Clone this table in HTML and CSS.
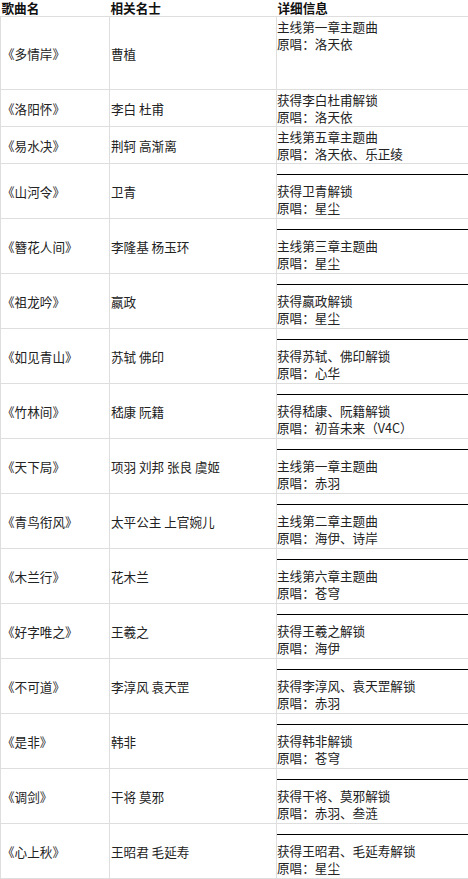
FILE: index.html
```html
<!DOCTYPE html>
<html lang="zh">
<head>
<meta charset="utf-8">
<title>歌曲列表</title>
<link rel="stylesheet" href="styles.css">
</head>
<body>
<table class="songs">
  <colgroup>
    <col class="c1">
    <col class="c2">
    <col class="c3">
  </colgroup>
  <thead>
    <tr><th>歌曲名</th><th>相关名士</th><th>详细信息</th></tr>
  </thead>
  <tbody>
    <tr class="tall"><td>《多情岸》</td><td>曹植</td><td class="info">主线第一章主题曲<br>原唱<span class="colon">：</span>洛天依</td></tr>
    <tr class="short"><td>《洛阳怀》</td><td>李白 杜甫</td><td class="info">获得李白杜甫解锁<br>原唱<span class="colon">：</span>洛天依</td></tr>
    <tr class="short"><td>《易水决》</td><td>荆轲 高渐离</td><td class="info">主线第五章主题曲<br>原唱<span class="colon">：</span>洛天依、乐正绫</td></tr>
    <tr><td>《山河令》</td><td>卫青</td><td class="info"><div class="rule"></div>获得卫青解锁<br>原唱<span class="colon">：</span>星尘</td></tr>
    <tr><td>《簪花人间》</td><td>李隆基 杨玉环</td><td class="info"><div class="rule"></div>主线第三章主题曲<br>原唱<span class="colon">：</span>星尘</td></tr>
    <tr><td>《祖龙吟》</td><td>嬴政</td><td class="info"><div class="rule"></div>获得嬴政解锁<br>原唱<span class="colon">：</span>星尘</td></tr>
    <tr><td>《如见青山》</td><td>苏轼 佛印</td><td class="info"><div class="rule"></div>获得苏轼、佛印解锁<br>原唱<span class="colon">：</span>心华</td></tr>
    <tr><td>《竹林间》</td><td>嵇康 阮籍</td><td class="info"><div class="rule"></div>获得嵇康、阮籍解锁<br>原唱<span class="colon">：</span>初音未来（V4C）</td></tr>
    <tr><td>《天下局》</td><td>项羽 刘邦 张良 虞姬</td><td class="info"><div class="rule"></div>主线第一章主题曲<br>原唱<span class="colon">：</span>赤羽</td></tr>
    <tr><td>《青鸟衔风》</td><td>太平公主 上官婉儿</td><td class="info"><div class="rule"></div>主线第二章主题曲<br>原唱<span class="colon">：</span>海伊、诗岸</td></tr>
    <tr><td>《木兰行》</td><td>花木兰</td><td class="info"><div class="rule"></div>主线第六章主题曲<br>原唱<span class="colon">：</span>苍穹</td></tr>
    <tr><td>《好字唯之》</td><td>王羲之</td><td class="info"><div class="rule"></div>获得王羲之解锁<br>原唱<span class="colon">：</span>海伊</td></tr>
    <tr><td>《不可道》</td><td>李淳风 袁天罡</td><td class="info"><div class="rule"></div>获得李淳风、袁天罡解锁<br>原唱<span class="colon">：</span>赤羽</td></tr>
    <tr><td>《是非》</td><td>韩非</td><td class="info"><div class="rule"></div>获得韩非解锁<br>原唱<span class="colon">：</span>苍穹</td></tr>
    <tr><td>《调剑》</td><td>干将 莫邪</td><td class="info"><div class="rule"></div>获得干将、莫邪解锁<br>原唱<span class="colon">：</span>赤羽、叁涟</td></tr>
    <tr><td>《心上秋》</td><td>王昭君 毛延寿</td><td class="info"><div class="rule"></div>获得王昭君、毛延寿解锁<br>原唱<span class="colon">：</span>星尘</td></tr>
  </tbody>
</table>
</body>
</html>
```
FILE: styles.css
```css
html, body {
  margin: 0;
  padding: 0;
  background: #ffffff;
}
body {
  font-family: "Noto Sans CJK SC", "Noto Sans", sans-serif;
  font-size: 12.6px;
  color: #222222;
}
.songs {
  border-collapse: collapse;
  table-layout: fixed;
  width: 468px;
}
.c1 { width: 109px; }
.c2 { width: 167px; }
.c3 { width: 192px; }
.songs th {
  font-weight: bold;
  text-align: left;
  padding: 0 1px;
  height: 16px;
  line-height: 16px;
  color: #111111;
  border-bottom: 1px solid #dedede;
  vertical-align: middle;
}
.songs td {
  padding: 1px 1px;
  line-height: 17px;
  height: 52px;
  vertical-align: middle;
  border: 1px solid #dedede;
  border-top: none;
  white-space: nowrap;
}
.songs td:first-child {
  border-left: 1px solid #dedede;
}
.songs td:last-child {
  border-right: none;
}
.songs td.info {
  vertical-align: top;
  padding-left: 0;
  padding-right: 0;
}
.songs tr.tall td {
  height: 70px;
}
.songs tr.short td {
  height: 34px;
}
.colon {
  font-family: "Noto Sans CJK JP", "Noto Sans CJK SC", sans-serif;
}
.rule {
  height: 9px;
  border-bottom: 1px solid #000000;
  margin-bottom: 7px;
}
```
